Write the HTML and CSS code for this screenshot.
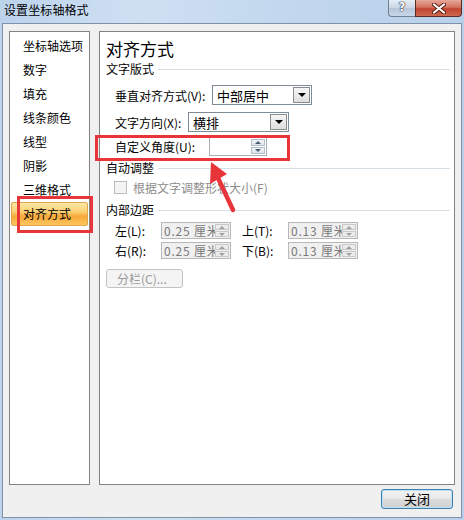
FILE: index.html
```html
<!DOCTYPE html>
<html lang="zh-CN">
<head>
<meta charset="utf-8">
<title>设置坐标轴格式</title>
<link rel="stylesheet" href="styles.css">
</head>
<body>
<div class="window">
  <div class="titlebar">
    <span class="title">设置坐标轴格式</span>
    <div class="caption-btns">
      <div class="cap-help">?</div>
      <div class="cap-close">
        <svg width="14" height="11" viewBox="0 0 14 11"><path d="M2 1.5 L12 9.5 M12 1.5 L2 9.5" stroke="#5a1a10" stroke-width="4" stroke-linecap="round"/><path d="M2 1.5 L12 9.5 M12 1.5 L2 9.5" stroke="#ffffff" stroke-width="2.2" stroke-linecap="round"/></svg>
      </div>
    </div>
  </div>
  <div class="client">
    <div class="panes">
      <ul class="nav">
        <li>坐标轴选项</li>
        <li>数字</li>
        <li>填充</li>
        <li>线条颜色</li>
        <li>线型</li>
        <li>阴影</li>
        <li>三维格式</li>
        <li class="selected">对齐方式</li>
      </ul>
      <div class="content">
        <div class="heading">对齐方式</div>
        <div class="group">文字版式</div>
        <div class="row r-valign">
          <span class="lbl w-valign">垂直对齐方式(V):</span>
          <div class="combo w100"><span class="combo-text">中部居中</span><span class="drop"><i></i></span></div>
        </div>
        <div class="row r-dir">
          <span class="lbl w-dir">文字方向(X):</span>
          <div class="combo w101"><span class="combo-text">横排</span><span class="drop"><i></i></span></div>
        </div>
        <div class="row r-angle">
          <span class="lbl w-angle">自定义角度(U):</span>
          <div class="spin w58"><span class="spin-text"></span><span class="spin-btns"><b class="up"></b><b class="down"></b></span></div>
        </div>
        <div class="group g-auto">自动调整</div>
        <div class="row r-check">
          <span class="checkbox"></span>
          <span class="disabled-text">根据文字调整形状大小(F)</span>
        </div>
        <div class="group g-margin">内部边距</div>
        <div class="row r-m1">
          <span class="lbl w-m">左(L):</span>
          <div class="spin dis w70"><span class="spin-text">0.25 厘米</span><span class="spin-btns"><b class="up"></b><b class="down"></b></span></div>
          <span class="lbl w-m gap-m">上(T):</span>
          <div class="spin dis w70"><span class="spin-text">0.13 厘米</span><span class="spin-btns"><b class="up"></b><b class="down"></b></span></div>
        </div>
        <div class="row r-m2">
          <span class="lbl w-m">右(R):</span>
          <div class="spin dis w70"><span class="spin-text">0.25 厘米</span><span class="spin-btns"><b class="up"></b><b class="down"></b></span></div>
          <span class="lbl w-m gap-m">下(B):</span>
          <div class="spin dis w70"><span class="spin-text">0.13 厘米</span><span class="spin-btns"><b class="up"></b><b class="down"></b></span></div>
        </div>
        <div class="btn-cols">分栏(C)...</div>
      </div>
    </div>
    <div class="footer">
      <div class="btn-close">关闭</div>
    </div>
  </div>
  <div class="mark mark-nav"></div>
  <div class="mark mark-angle"></div>
  <svg class="arrow" width="40" height="56" viewBox="0 0 40 56">
    <path d="M28 50 L13 18" stroke="#e8353a" stroke-width="4.5" stroke-linecap="round"/>
    <path d="M6 2 L5 24 L22 14 Z" fill="#e8353a"/>
  </svg>
</div>
</body>
</html>
```

FILE: styles.css
```css
* { box-sizing: border-box; }
html, body { margin: 0; padding: 0; }
body {
  width: 464px;
  height: 520px;
  overflow: hidden;
  font-family: "Noto Sans CJK SC", "Noto Sans", sans-serif;
  font-size: 12px;
  color: #000;
}
.window {
  position: relative;
  width: 464px;
  height: 520px;
  background: linear-gradient(90deg, #bcd3ec 0%, #cfe0f2 30%, #c3d8ee 60%, #b8d0ea 100%);
}
.titlebar {
  height: 23px;
  display: flex;
  align-items: flex-start;
  justify-content: space-between;
}
.title {
  margin-left: 4px;
  line-height: 20px;
  font-size: 12px;
  color: #000;
  letter-spacing: 0.1px;
}
.caption-btns {
  display: flex;
  margin-right: 2px;
}
.cap-help {
  width: 27px;
  height: 17px;
  border: 1px solid #6f7f94;
  border-top: none;
  border-right: none;
  border-radius: 0 0 0 4px;
  background: linear-gradient(#e6eef7, #c9d6e4 50%, #b6c6d8 51%, #c8d7e8);
  color: #fff;
  font-family: "DejaVu Sans", sans-serif;
  font-weight: bold;
  font-size: 12px;
  line-height: 15px;
  text-align: center;
  text-shadow: 0 0 1px #223, 0 0 1px #223, 0 0 1px #223;
}
.cap-close {
  width: 47px;
  height: 17px;
  border: 1px solid #5b2a23;
  border-top: none;
  border-radius: 0 0 4px 0;
  background: linear-gradient(#e7a899, #d37360 45%, #c2432f 55%, #d06a50);
  display: flex;
  align-items: center;
  justify-content: center;
}
.client {
  margin: 0 2px;
  width: 460px;
  height: 495px;
  border: 1px solid #8092aa;
  background: #f0f0f0;
  padding: 7px 6px 0 6px;
  display: flex;
  flex-direction: column;
}
.panes {
  display: flex;
  height: 454px;
  gap: 9px;
}
.nav {
  list-style: none;
  margin: 0;
  padding: 2px 0 0 0;
  width: 81px;
  border: 1px solid #828282;
  background: #fff;
}
.nav li {
  height: 24px;
  line-height: 24px;
  padding-left: 12px;
  margin: 0 1px;
  white-space: nowrap;
}
.nav li.selected {
  background: linear-gradient(#fde7a6 0%, #fbd074 40%, #f7a838 60%, #fcc660 100%);
  border: 1px solid #e2a54a;
  border-radius: 2px;
  line-height: 22px;
  padding-left: 11px;
}
.content {
  flex: 1;
  border: 1px solid #828282;
  background: #fff;
  padding: 4px 0 0 6px;
}
.heading {
  height: 25px;
  line-height: 25px;
  font-size: 17px;
}
.group {
  height: 16px;
  line-height: 16px;
  display: flex;
  align-items: center;
  white-space: nowrap;
}
.group::after {
  content: "";
  flex: 1;
  height: 1px;
  background: #d5dfe5;
  margin: 1px 4px 0 4px;
}
.row {
  display: flex;
  align-items: center;
  padding-left: 9px;
}
.lbl { white-space: nowrap; }
.w-valign { width: 97px; }
.w-dir { width: 73px; }
.w-angle { width: 94px; }
.w-m { width: 46px; }
.gap-m { margin-left: 11px; }
.r-valign { margin-top: 8px; height: 20px; }
.r-dir { margin-top: 7px; height: 20px; }
.r-angle { margin-top: 5px; height: 19px; }
.g-auto { margin-top: 4px; }
.r-check { margin-top: 3px; height: 17px; padding-left: 8px; }
.g-margin { margin-top: 6px; }
.r-m1 { margin-top: 4px; height: 17px; }
.r-m2 { margin-top: 3px; height: 17px; }

.combo {
  height: 20px;
  border: 1px solid #7f8b99;
  background: #fff;
  display: flex;
  align-items: center;
  justify-content: space-between;
  padding: 0 1px 0 4px;
}
.w100 { width: 100px; }
.w101 { width: 101px; }
.w58 { width: 58px; }
.w70 { width: 70px; }
.combo-text { font-size: 13px; }
.drop {
  width: 17px;
  height: 16px;
  border: 1px solid #8c8c8c;
  background: linear-gradient(#f6f6f6, #dedede);
  display: flex;
  align-items: center;
  justify-content: center;
}
.drop i {
  width: 0;
  height: 0;
  border-left: 4px solid transparent;
  border-right: 4px solid transparent;
  border-top: 4px solid #000;
}
.spin {
  height: 19px;
  border: 1px solid #abadb3;
  background: #fff;
  display: flex;
  align-items: center;
  justify-content: space-between;
  padding: 0 1px 0 2px;
  overflow: hidden;
}
.spin.dis {
  height: 17px;
  background: #f0f0f0;
  border-color: #b8b8b8;
  color: #7a7a7a;
}
.spin-text {
  white-space: nowrap;
  overflow: hidden;
  flex: 1;
  letter-spacing: 0.8px;
  font-size: 12px;
}
.spin-btns {
  width: 14px;
  height: calc(100% - 2px);
  display: flex;
  flex-direction: column;
  gap: 1px;
}
.spin-btns b {
  flex: 1;
  border: 1px solid #b4bfcc;
  background: linear-gradient(#f2f5f8, #dde3ea);
  display: flex;
  align-items: center;
  justify-content: center;
}
.spin-btns b::after {
  content: "";
  width: 0;
  height: 0;
  border-left: 3px solid transparent;
  border-right: 3px solid transparent;
}
.spin-btns b.up::after { border-bottom: 3px solid #4a5a70; }
.spin-btns b.down::after { border-top: 3px solid #4a5a70; }
.spin.dis .spin-btns b { border-color: #c9c9c9; background: #ececec; }
.spin.dis .spin-btns b.up::after { border-bottom-color: #a0a0a0; }
.spin.dis .spin-btns b.down::after { border-top-color: #a0a0a0; }

.checkbox {
  width: 13px;
  height: 13px;
  border: 1px solid #bdbdbd;
  background: #f4f4f4;
  margin-right: 6px;
}
.disabled-text { color: #8d8d8d; }
.btn-cols {
  margin-top: 10px;
  width: 77px;
  height: 19px;
  border: 1px solid #c2c2c2;
  border-radius: 3px;
  background: #f4f4f4;
  color: #9a9a9a;
  line-height: 17px;
  padding-left: 10px;
}
.footer {
  display: flex;
  justify-content: flex-end;
  margin-top: 4px;
  padding-right: 2px;
}
.btn-close {
  width: 72px;
  height: 20px;
  border: 1px solid #3c7fb1;
  border-radius: 3px;
  background: linear-gradient(#f2f2f2 0%, #ebebeb 45%, #dddddd 50%, #cfcfcf 100%);
  box-shadow: inset 0 0 0 1px #bfe0f5;
  text-align: center;
  line-height: 18px;
  font-size: 13px;
}
.mark {
  position: absolute;
  border: 3px solid #e8353a;
}
.mark-nav {
  left: 17px;
  top: 196px;
  width: 76px;
  height: 37px;
}
.mark-angle {
  left: 95px;
  top: 135px;
  width: 195px;
  height: 26px;
}
.arrow {
  position: absolute;
  left: 205px;
  top: 160px;
}
```
